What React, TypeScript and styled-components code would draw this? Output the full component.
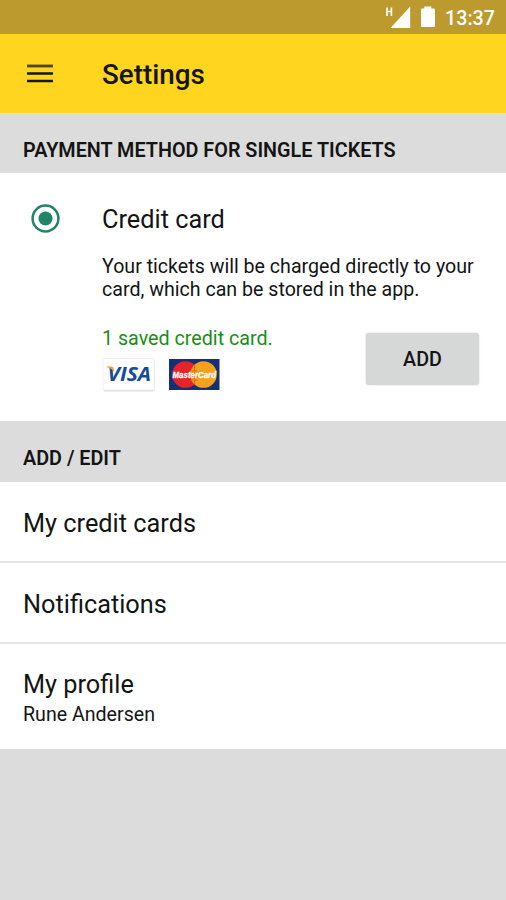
import React from "react";
import styled, { createGlobalStyle } from "styled-components";

const GlobalStyle = createGlobalStyle`
  * { box-sizing: border-box; }
  body { margin: 0; background: #dcdcdc; font-family: Roboto, "Liberation Sans", sans-serif; color: #141414; }
  h1, h2, p { margin: 0; }
`;

const Screen = styled.main`
  width: 506px;
  height: 900px;
  background: #dcdcdc;
  overflow: hidden;
`;

const StatusBar = styled.div`
  height: 34px;
  padding: 2px 11px 0 0;
  background: #bd9a2e;
  color: #fff;
  display: flex;
  align-items: center;
  justify-content: flex-end;
  font-size: 19.7px;
  font-weight: 500;
`;

const StatusIcons = styled.svg`
  display: block;
  width: 54px;
  height: 24px;
  margin-right: 8px;
`;

const AppBar = styled.header`
  height: 79px;
  padding: 2px 0 0 26px;
  background: #ffd51f;
  display: flex;
  align-items: center;
`;

const MenuButton = styled.button`
  width: 76px;
  height: 28px;
  padding: 0;
  border: 0;
  background: none;
  svg { display: block; }
`;

const Title = styled.h1`
  font-size: 27.8px;
  line-height: 34px;
  font-weight: 500;
`;

const SectionHeader = styled.h2<{ $height: number }>`
  height: ${(p) => p.$height}px;
  padding: 14px 23px 0;
  display: flex;
  align-items: center;
  font-size: 19.8px;
  font-weight: 600;
`;

const Payment = styled.section`
  height: 248px;
  padding: 30px 27px 0 31px;
  background: #fff;
  display: grid;
  grid-template-columns: 71px 1fr;
`;

const Radio = styled.svg`
  display: block;
  width: 29px;
  height: 29px;
  margin-top: 1px;
`;

const Label = styled.div`
  height: 32px;
  font-size: 25.3px;
  line-height: 34px;
`;

const Description = styled.p`
  margin-top: 20px;
  font-size: 19.63px;
  line-height: 23px;
  white-space: nowrap;
`;

const Saved = styled.div`
  margin-top: 32px;
  display: flex;
  justify-content: space-between;
`;

const SavedText = styled.p`
  margin-top: -6px;
  color: #159015;
  font-size: 19.7px;
  line-height: 24px;
`;

const Cards = styled.div`
  display: flex;
  gap: 13px;
  margin-top: 7px;
  svg { display: block; overflow: visible; }
`;

const AddButton = styled.button`
  width: 113px;
  height: 52px;
  border: 0;
  border-radius: 3px;
  background: #d5d8d7;
  box-shadow: 0 0 2px rgba(0, 0, 0, 0.2);
  color: #141414;
  padding: 0;
  font: 500 19.7px Roboto, sans-serif;
`;

const Row = styled.div<{ $height: number }>`
  height: ${(p) => p.$height}px;
  padding: 2px 23px 0;
  background: #fff;
  display: flex;
  flex-direction: column;
  justify-content: center;
  & + & { padding-top: 3px; border-top: 2px solid #e4e4e4; }
`;

const Detail = styled.div`
  font-size: 19.6px;
  line-height: 29px;
`;

const VisaLogo = () => (
  <svg width="53" height="34" viewBox="0 0 53 34" aria-label="Visa">
    <rect x="1.500" y="1.500" width="51" height="32" rx="1.500" fill="#dedede" />
    <rect x="1" y=".5" width="51" height="31.500" rx="1" fill="#fff" stroke="#ececec" strokeWidth=".8" />
    <text x="5.500" y="23" textLength="43.500" lengthAdjust="spacingAndGlyphs" fill="#164b96" fontFamily="Open Sans" fontSize="20" fontWeight="700" fontStyle="italic">VISA</text>
    <path d="M4.500 8.500H9.500q1.700 0 2.100 2l.7 3.500Q10 10.500 4.500 9z" fill="#e9a62e" />
  </svg>
);

const MasterCardLogo = () => (
  <svg width="52" height="33" viewBox="0 0 52 33" aria-label="MasterCard">
    <rect x="1" y="1" width="50.500" height="31" fill="#163078" />
    <circle cx="17.500" cy="16.500" r="13.300" fill="#e52329" />
    <circle cx="35.500" cy="16.500" r="13.300" fill="#f6a11c" />
    <path d="M26.500 6.800v19.400M23.500 13h6M22.500 16h8M22.500 19h8M23.500 22h6" stroke="#e5652b" />
    <text x="4.500" y="20" textLength="43.500" lengthAdjust="spacingAndGlyphs" fill="#fff" stroke="#fff" strokeWidth=".3" fontFamily="Liberation Sans" fontSize="9" fontWeight="700" fontStyle="italic">MasterCard</text>
  </svg>
);

export default function App() {
  return (
    <>
      <GlobalStyle />
      <Screen>
        <StatusBar>
          <StatusIcons viewBox="0 0 54 24" fill="#fff">
            <path d="M4 1.500v8.500M8.400 1.500v8.500M4 5.500h5" stroke="#fff" strokeWidth="1.700" />
            <path d="M7.500 22 27.200.5V22z" />
            <path d="M39 2.500h2.300V.6h7v1.900h2.500q1.200 0 1.200 1.200V20q0 1-1 1H39q-1 0-1-1V3.500q0-1 1-1z" />
          </StatusIcons>
          <span>13:37</span>
        </StatusBar>
        <AppBar>
          <MenuButton aria-label="Menu">
            <svg width="28" height="28" viewBox="0 0 28 28" strokeWidth="2.400">
              <path d="M1 5h26" stroke="#4e4310" strokeWidth="2.800" />
              <path d="M1 12.500h26M1 20h26" stroke="#1a1605" />
            </svg>
          </MenuButton>
          <Title>Settings</Title>
        </AppBar>
        <SectionHeader $height={60}>PAYMENT METHOD FOR SINGLE TICKETS</SectionHeader>
        <Payment>
          <Radio viewBox="0 0 29 29">
            <circle cx="14.500" cy="14.500" r="12.900" fill="none" stroke="#218469" strokeWidth="2.500" />
            <circle cx="14.500" cy="14.500" r="7" fill="#218469" />
          </Radio>
          <div>
            <Label>Credit card</Label>
            <Description>
              Your tickets will be charged directly to your
              <br />
              card, which can be stored in the app.
            </Description>
            <Saved>
              <div>
                <SavedText>1 saved credit card.</SavedText>
                <Cards>
                  <VisaLogo />
                  <MasterCardLogo />
                </Cards>
              </div>
              <AddButton>ADD</AddButton>
            </Saved>
          </div>
        </Payment>
        <SectionHeader $height={61}>ADD / EDIT</SectionHeader>
        <Row $height={79}>
          <Label>My credit cards</Label>
        </Row>
        <Row $height={81}>
          <Label>Notifications</Label>
        </Row>
        <Row $height={107}>
          <Label>My profile</Label>
          <Detail>Rune Andersen</Detail>
        </Row>
      </Screen>
    </>
  );
}
